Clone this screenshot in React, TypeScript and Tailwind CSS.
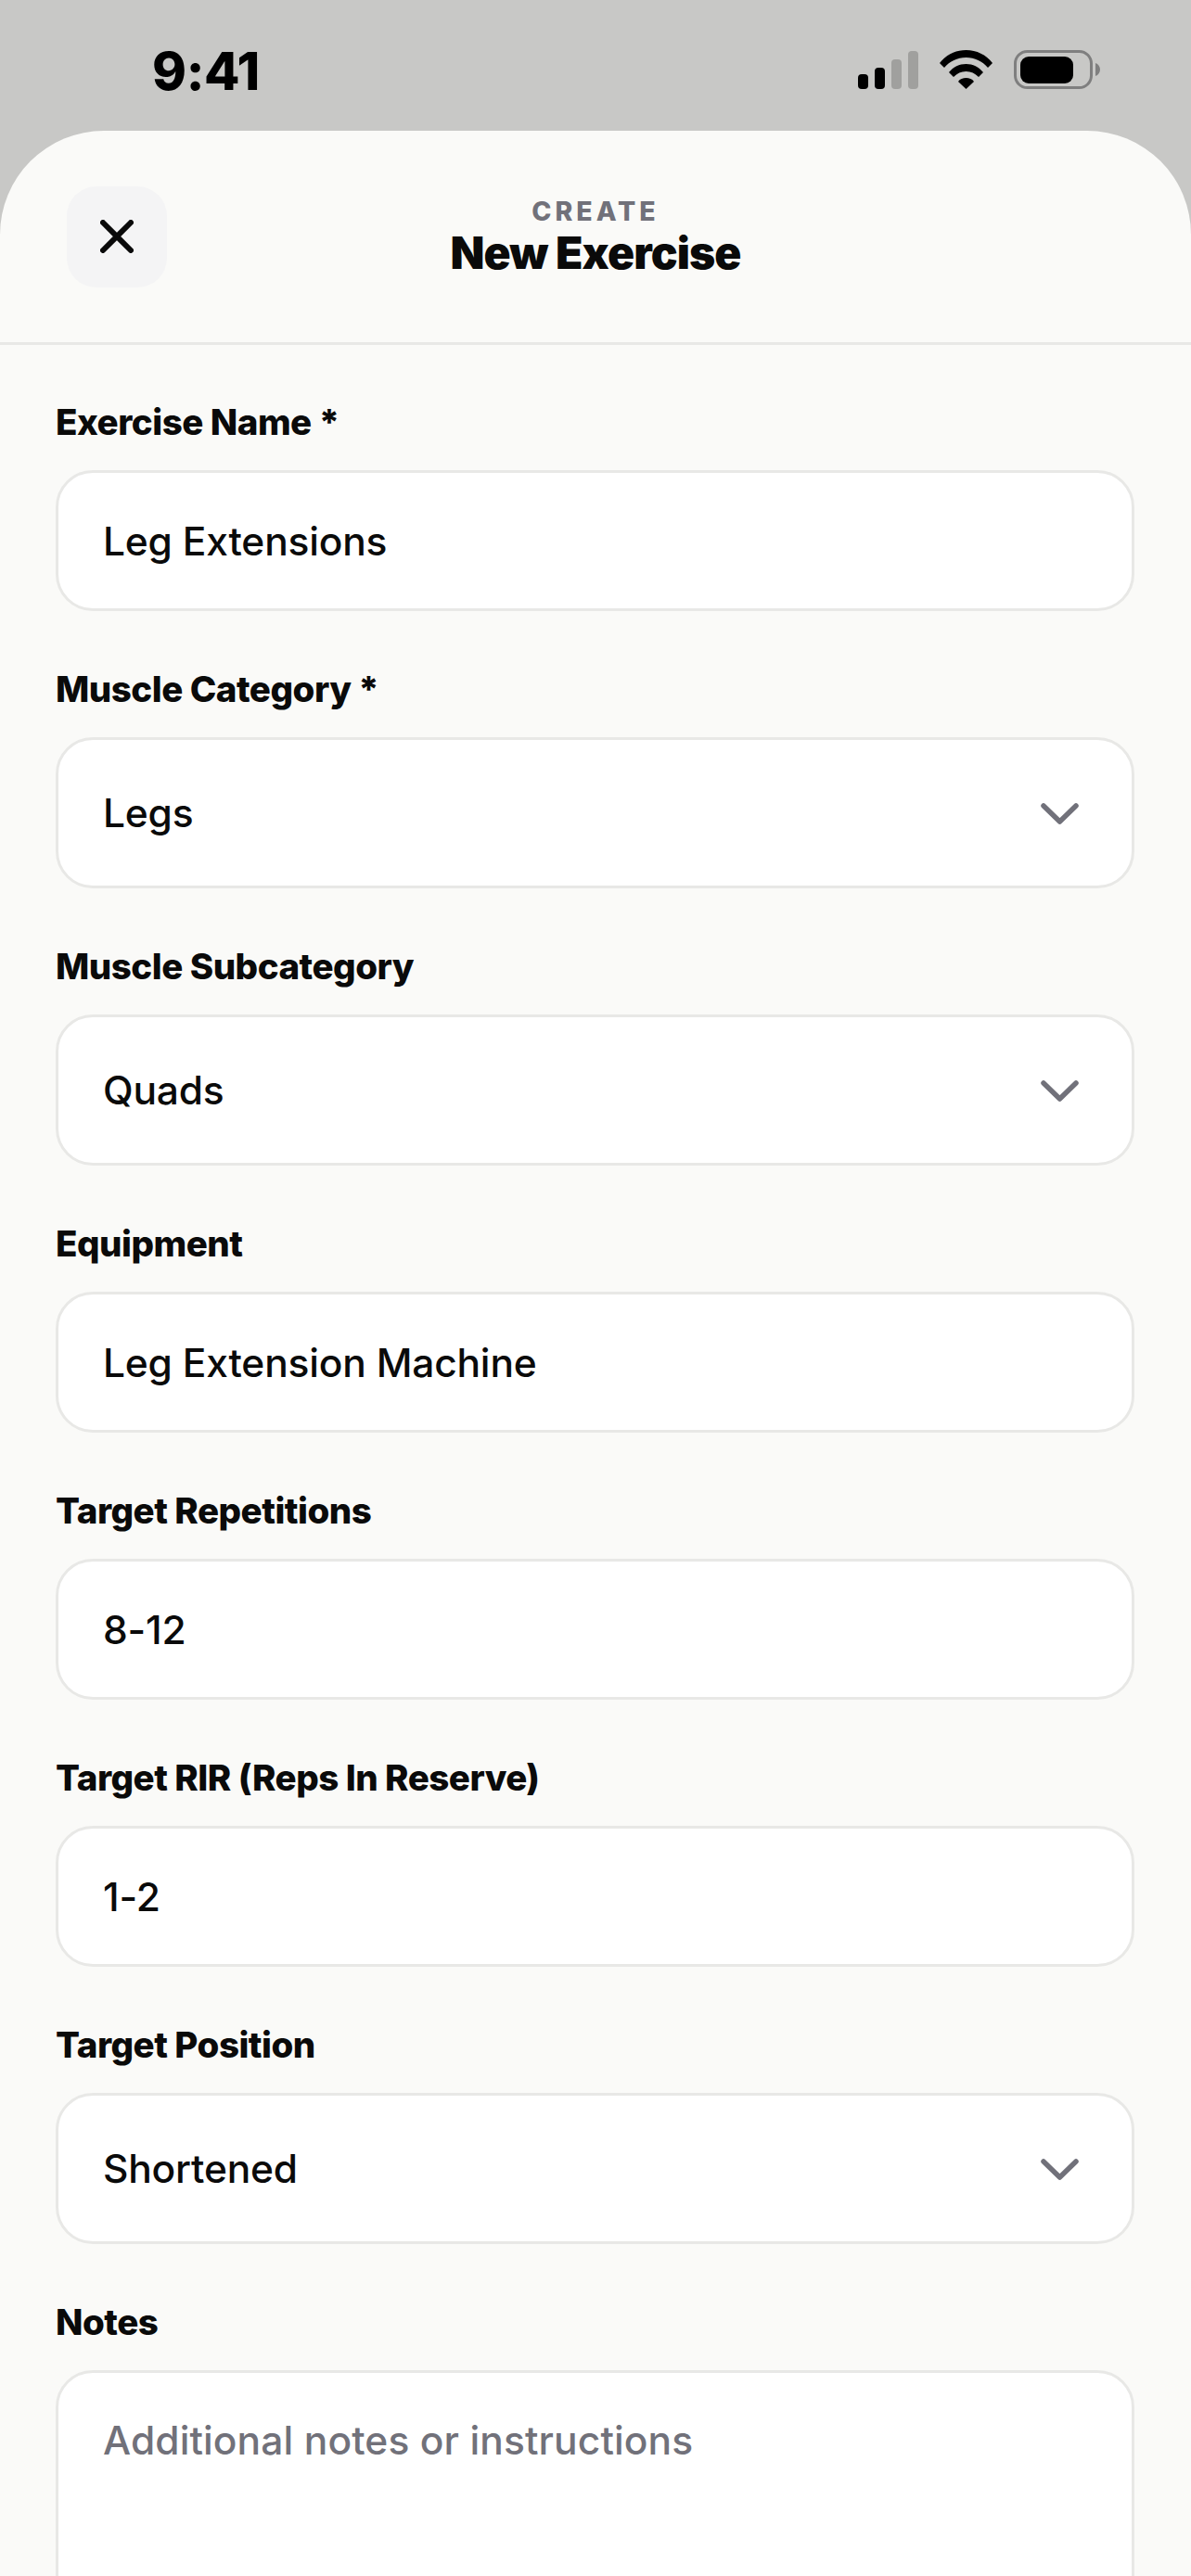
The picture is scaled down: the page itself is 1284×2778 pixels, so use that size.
const inputBox =
  'w-full rounded-[40px] border-[3px] border-[#e8e8e6] bg-white px-12 text-[42.5px] font-medium tracking-[-0.2px] text-[#0a0a0a] outline-none';

function Field({ label, children }: { label: string; children: React.ReactNode }) {
  return (
    <div className="flex flex-col gap-7">
      <label className="text-[38.5px] leading-[48px] font-extrabold tracking-[-0.5px] text-[#0a0a0a]">{label}</label>
      {children}
    </div>
  );
}

function TextField({ label, value }: { label: string; value: string }) {
  return (
    <Field label={label}>
      <input readOnly defaultValue={value} className={`${inputBox} h-[152px]`} />
    </Field>
  );
}

function SelectField({ label, value }: { label: string; value: string }) {
  return (
    <Field label={label}>
      <div className={`${inputBox} flex h-[163px] items-center justify-between pr-[57px]`}>
        <span>{value}</span>
        <svg className="mt-0.5" width="41" height="23" viewBox="0 0 41 23" fill="none">
          <path d="M3 3 L20.5 20 L38 3" stroke="#71717a" strokeWidth="5.5" strokeLinecap="round" strokeLinejoin="round" />
        </svg>
      </div>
    </Field>
  );
}

function StatusIcons() {
  return (
    <div className="flex items-end">
      <svg width="65" height="41" viewBox="0 0 65 41">
        <rect x="0" y="25" width="11" height="16" rx="4" fill="#000" />
        <rect x="18" y="18" width="11" height="23" rx="4" fill="#000" />
        <rect x="36" y="9" width="11" height="32" rx="4" fill="#a0a09e" />
        <rect x="54" y="0" width="11" height="41" rx="4" fill="#a0a09e" />
      </svg>
      <svg className="ml-[23px]" width="57" height="42" viewBox="0 0 57 42">
        <path d="M0 14 C7 5 17 0 28.5 0 C40 0 50 5 57 14 L52 19 C46 12 38 8 28.5 8 C19 8 11 12 5 19 Z" fill="#000" />
        <path d="M10 24 C15 18 21 15 28.5 15 C36 15 42 18 47 24 L42 29 C38 25 34 23 28.5 23 C23 23 19 25 15 29 Z" fill="#000" />
        <path d="M20 34 C22 31 25 30 28.5 30 C32 30 35 31 37 34 L28.5 42 Z" fill="#000" />
      </svg>
      <svg className="ml-[23px]" width="93" height="42" viewBox="0 0 93 42">
        <rect x="1.5" y="1.5" width="82" height="39" rx="13" fill="none" stroke="#7f7f7f" strokeWidth="3" />
        <rect x="7" y="7" width="57" height="29" rx="9" fill="#000" />
        <path d="M88 14 C91 15 93 18 93 21 C93 24 91 27 88 28 Z" fill="#7f7f7f" />
      </svg>
    </div>
  );
}

export default function App() {
  return (
    <div className="flex h-screen flex-col overflow-hidden bg-[#c8c8c6] font-[Inter,sans-serif]">
      <div className="flex h-[141px] shrink-0 items-start justify-between pt-[54px] pr-[98px] pl-[164px]">
        <span className="text-[56px] leading-[46px] font-extrabold tracking-[-0.4px] text-black">9:41</span>
        <StatusIcons />
      </div>

      <div className="flex grow flex-col rounded-t-[112px] bg-[#fafaf8]">
        <header className="flex h-[231px] shrink-0 items-center border-b-[3px] border-[#e8e8e6] px-[72px]">
          <button className="flex h-[109px] w-[108px] items-center justify-center rounded-[32px] bg-[#f4f4f5]">
            <svg width="36" height="36" viewBox="0 0 36 36" fill="none">
              <path d="M3 3 L33 33 M33 3 L3 33" stroke="#0a0a0a" strokeWidth="6" strokeLinecap="round" />
            </svg>
          </button>
          <div className="flex grow flex-col items-center pt-px">
            <span className="text-[28.5px] leading-[34px] font-extrabold tracking-[4px] text-[#71717a]">CREATE</span>
            <h1 className="text-[48px] leading-[56px] font-black tracking-[-0.9px] text-[#0a0a0a]">New Exercise</h1>
          </div>
          <div className="w-[108px]" />
        </header>

        <form className="flex flex-col gap-[60px] pt-[59px] pr-[61px] pl-[60px]">
          <TextField label="Exercise Name *" value="Leg Extensions" />
          <SelectField label="Muscle Category *" value="Legs" />
          <SelectField label="Muscle Subcategory" value="Quads" />
          <TextField label="Equipment" value="Leg Extension Machine" />
          <TextField label="Target Repetitions" value="8-12" />
          <TextField label="Target RIR (Reps In Reserve)" value="1-2" />
          <SelectField label="Target Position" value="Shortened" />
          <Field label="Notes">
            <textarea
              readOnly
              placeholder="Additional notes or instructions"
              className={`${inputBox} h-[320px] resize-none py-[46px] leading-[54px] tracking-[0.1px] placeholder:text-[#71717a]`}
            />
          </Field>
        </form>
      </div>
    </div>
  );
}
